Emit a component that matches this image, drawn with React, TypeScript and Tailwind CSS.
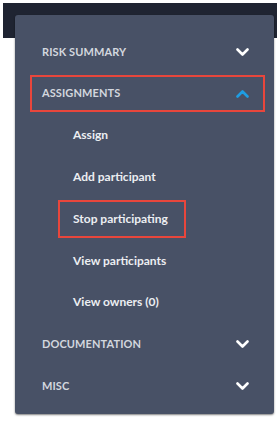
const font = { fontFamily: "Lato, 'Open Sans', sans-serif" };

function Chevron({ up }: { up?: boolean }) {
  return (
    <svg width="13" height="8" viewBox="0 0 13 8" fill="none" className={up ? "text-[#1e9de3]" : "text-white"}>
      <polyline
        points={up ? "1.5,6.5 6.5,1.5 11.5,6.5" : "1.5,1.5 6.5,6.5 11.5,1.5"}
        stroke="currentColor"
        strokeWidth="2.6"
        strokeLinecap="round"
        strokeLinejoin="round"
      />
    </svg>
  );
}

function Header({
  label,
  open,
  marked,
}: {
  label: string;
  open?: boolean;
  marked?: boolean;
}) {
  return (
    <div className="h-[41.75px] flex items-center pl-[15px]">
      <div
        className={
          "h-[37px] w-[235px] shrink-0 flex items-center justify-between pl-[10px] pr-[14px] border-2 " +
          (marked ? "border-[#e8463c]" : "border-transparent")
        }
      >
        <span className="text-[11px] font-bold tracking-[0.1px] text-[#d3d7de]">
          {label}
        </span>
        <Chevron up={open} />
      </div>
    </div>
  );
}

function Item({ label, marked }: { label: string; marked?: boolean }) {
  return (
    <div className="h-[41.75px] flex items-center pl-[43px]">
      <div
        className={
          "h-[38px] flex items-center pl-[13px] pr-[16px] border-2 " +
          (marked ? "border-[#e8463c]" : "border-transparent")
        }
      >
        <span className="text-[12px] font-bold text-[#eceef2]">{label}</span>
      </div>
    </div>
  );
}

export default function App() {
  return (
    <div className="relative w-[280px] h-[421px] bg-white overflow-hidden" style={font}>
      <div className="mt-[3px] mx-[3px] h-[35px] bg-[#1f2432]" />
      <div className="absolute left-[15px] top-[15px] w-[259px] h-[399px] rounded-[3px] bg-[#485166] shadow-[0_1px_2px_rgba(0,0,0,0.5)] pt-[16px]">
        <Header label="RISK SUMMARY" />
        <Header label="ASSIGNMENTS" open marked />
        <Item label="Assign" />
        <Item label="Add participant" />
        <Item label="Stop participating" marked />
        <Item label="View participants" />
        <Item label="View owners (0)" />
        <Header label="DOCUMENTATION" />
        <Header label="MISC" />
      </div>
    </div>
  );
}
